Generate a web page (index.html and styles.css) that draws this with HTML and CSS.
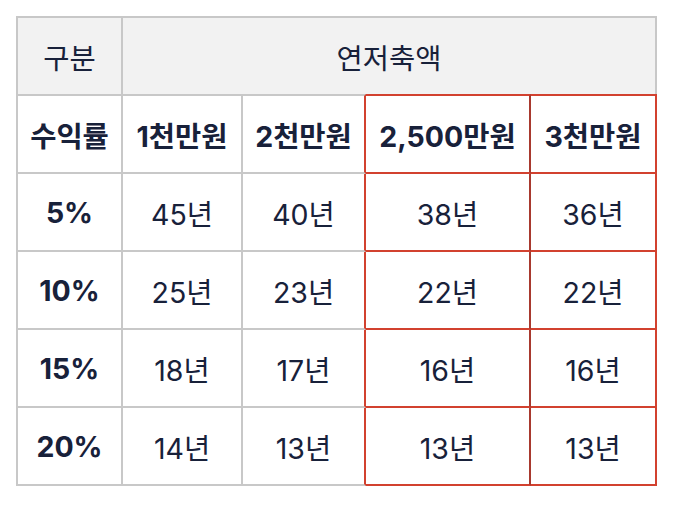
FILE: index.html
```html
<!DOCTYPE html>
<html lang="ko">
<head>
<meta charset="utf-8">
<link rel="stylesheet" href="styles.css">
</head>
<body>
<table class="grid">
  <colgroup>
    <col class="c1"><col class="c2"><col class="c3"><col class="c4"><col class="c5">
  </colgroup>
  <tr class="head">
    <td class="light">구분</td>
    <td class="light" colspan="4">연저축액</td>
  </tr>
  <tr class="sub">
    <td class="bold">수익률</td>
    <td class="bold">1천만원</td>
    <td class="bold edge">2천만원</td>
    <td class="bold red mid">2,500만원</td>
    <td class="bold red">3천만원</td>
  </tr>
  <tr>
    <td class="bold">5%</td><td>45년</td><td class="edge">40년</td><td class="red mid">38년</td><td class="red">36년</td>
  </tr>
  <tr>
    <td class="bold">10%</td><td>25년</td><td class="edge">23년</td><td class="red mid">22년</td><td class="red">22년</td>
  </tr>
  <tr>
    <td class="bold">15%</td><td>18년</td><td class="edge">17년</td><td class="red mid">16년</td><td class="red">16년</td>
  </tr>
  <tr>
    <td class="bold">20%</td><td>14년</td><td class="edge">13년</td><td class="red mid">13년</td><td class="red">13년</td>
  </tr>
</table>
</body>
</html>
```

FILE: styles.css
```css
html, body {
  margin: 0;
  padding: 0;
  background: #ffffff;
}
body {
  padding: 16px 0 0 16px;
  font-family: "Inter", "Noto Sans CJK KR", sans-serif;
  color: #18213a;
}
.grid {
  border-collapse: separate;
  border-spacing: 0;
  table-layout: fixed;
  width: 641px;
  border-top: 2px solid #c8c8c8;
  border-left: 2px solid #c8c8c8;
}
.c1 { width: 105px; }
.c2 { width: 120px; }
.c3 { width: 123px; }
.c4 { width: 165px; }
.c5 { width: 126px; }
.grid td {
  box-sizing: border-box;
  height: 78px;
  padding: 0;
  text-align: center;
  vertical-align: middle;
  font-size: 28.5px;
  font-weight: 400;
  border-right: 2px solid #c8c8c8;
  border-bottom: 2px solid #c8c8c8;
  white-space: nowrap;
}
.grid .head td {
  height: 76px;
  border-bottom: 0;
  background: #f2f2f2;
}
.grid .sub td {
  height: 80px;
  border-top: 2px solid #c8c8c8;
}
.grid td.bold {
  font-weight: 700;
}
.grid td.edge {
  border-right-color: #d2412f;
}
.grid td.red {
  border-right-color: #d2412f;
  border-bottom-color: #d2412f;
}
.grid td.red.mid {
  border-right-color: #a8392e;
}
.grid .sub td.red {
  border-top-color: #d2412f;
}
```
